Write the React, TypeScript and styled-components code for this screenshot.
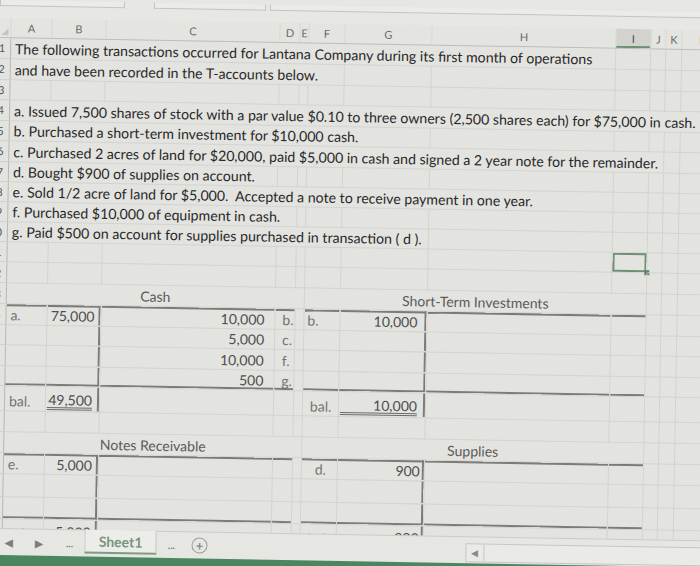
import React from "react";
import styled, { createGlobalStyle, css } from "styled-components";

const COLS = [12, 41, 54, 174, 20, 9, 36, 87, 184, 35, 15, 16, 40, 40];
const TEMPLATE = COLS.map((c) => `${c}px`).join(" ");
const LETTERS = ["", "A", "B", "C", "D", "E", "F", "G", "H", "I", "J", "K", "L", "M"];
const LINE = "#7b7b79";
const GRID = "#d3d3d0";
const SEL = "#6f8f73";
const FONT = `Lato, "Liberation Sans", Arial, sans-serif`;

const GlobalStyle = createGlobalStyle`
  html, body { margin: 0; padding: 0; background: #e6e6e3; overflow: hidden; }
  body { width: 700px; height: 566px; font-family: ${FONT}; }
`;

const Frame = styled.div`
  width: 720px;
  height: 600px;
  transform: rotate(1deg);
  transform-origin: 0 0;
  display: flex;
  flex-direction: column;
  background: #e3e3e0;
`;

const TopStrip = styled.div`
  height: 18px;
  flex-shrink: 0;
  display: flex;
  align-items: flex-start;
  background: #e7e7e4;
`;

const FieldBox = styled.div<{ $w: number; $ml: number }>`
  width: ${(p) => p.$w}px;
  margin-left: ${(p) => p.$ml}px;
  height: 6px;
  box-sizing: border-box;
  border: 1px solid #c3c3c0;
  border-top: none;
  background: #ebebe8;
`;

const HeaderRow = styled.div`
  display: grid;
  flex-shrink: 0;
  grid-template-columns: ${TEMPLATE};
  height: 20px;
  box-sizing: border-box;
  border-bottom: 1px solid #bdbdba;
  background: #e4e4e1;
`;

const HeaderCell = styled.div<{ $active?: boolean }>`
  display: flex;
  align-items: center;
  justify-content: center;
  font-size: 11px;
  color: #6b6b6b;
  border-right: 1px solid #d8d8d5;
  position: relative;
  ${(p) =>
    p.$active &&
    css`
      background: #d2d3cf;
      color: #4a4a4a;
      box-shadow: inset 0 -2px 0 ${SEL};
    `}
`;

const CornerMark = styled.span`
  position: absolute;
  right: 2px;
  bottom: 2px;
  width: 0;
  height: 0;
  border-left: 7px solid transparent;
  border-bottom: 7px solid #c4c4c1;
`;

const SheetBody = styled.div`
  height: 490px;
  flex-shrink: 0;
  overflow: hidden;
`;

const Row = styled.div<{ $h: number }>`
  display: grid;
  grid-template-columns: ${TEMPLATE};
  height: ${(p) => p.$h}px;
`;

const RowHead = styled.div`
  box-sizing: border-box;
  border-right: 1px solid #b8b8b5;
  border-bottom: 1px solid #d0d0cd;
  display: flex;
  align-items: center;
  justify-content: flex-end;
  padding-right: 5px;
  overflow: hidden;
  font-size: 11px;
  color: #555;
`;

type Tone = "main" | "num" | "label" | "title";
const TONES: Record<Tone, string> = {
  main: "#282828",
  num: "#4e4e4e",
  label: "#737373",
  title: "#5a5a5a",
};

type CellProps = {
  $span: number;
  $align: "left" | "right" | "center";
  $tone: Tone;
  $pl: number;
  $pr: number;
  $t?: boolean;
  $b?: boolean;
  $r?: boolean;
  $sel?: boolean;
  $size: number;
};

const shadow = (p: CellProps) => {
  const s: string[] = [];
  if (p.$t) s.push(`inset 0 2px 0 ${LINE}`);
  if (p.$b) s.push(`inset 0 -2px 0 ${LINE}`);
  if (p.$r) s.push(`inset -2px 0 0 ${LINE}`);
  if (p.$sel) s.push(`inset 0 0 0 2px ${SEL}`);
  return s.length ? s.join(", ") : "none";
};

const Cell = styled.div<CellProps>`
  grid-column: span ${(p) => p.$span};
  box-sizing: border-box;
  border-right: 1px solid ${GRID};
  border-bottom: 1px solid ${GRID};
  display: flex;
  align-items: flex-end;
  justify-content: ${(p) =>
    p.$align === "right" ? "flex-end" : p.$align === "center" ? "center" : "flex-start"};
  padding: 0 ${(p) => p.$pr}px 1px ${(p) => p.$pl}px;
  white-space: pre;
  font-size: ${(p) => p.$size}px;
  line-height: 16px;
  color: ${(p) => TONES[p.$tone]};
  box-shadow: ${(p) => shadow(p)};
  position: relative;
  ${(p) =>
    p.$sel &&
    css`
      &::after {
        content: "";
        position: absolute;
        right: -3px;
        bottom: -3px;
        width: 5px;
        height: 5px;
        background: #5f8064;
      }
    `}
`;

const Underlined = styled.span`
  display: block;
  width: 100%;
  text-align: right;
  line-height: 15px;
  border-bottom: 3px double #6a6a6a;
`;

const TabBar = styled.div`
  height: 27px;
  flex-shrink: 0;
  box-sizing: border-box;
  display: flex;
  align-items: stretch;
  background: #e6e6e3;
  border-top: 1px solid #cbcbc8;
  padding-left: 12px;
`;

const NavItem = styled.div<{ $w: number; $ml: number }>`
  width: ${(p) => p.$w}px;
  margin-left: ${(p) => p.$ml}px;
  display: flex;
  align-items: center;
  justify-content: center;
  color: #7c7c7c;
  font-size: 10px;
  font-weight: 700;
`;

const SheetTab = styled.div`
  width: 72px;
  margin-left: 8px;
  height: 24px;
  box-sizing: border-box;
  display: flex;
  align-items: center;
  justify-content: center;
  background: #ecece9;
  border-left: 1px solid #cbcbc8;
  border-right: 1px solid #c4c4c1;
  border-bottom: 2px solid #7e9c82;
  color: #77967b;
  font-weight: 700;
  font-size: 14px;
  margin-top: -1px;
`;

const AddButton = styled.div`
  width: 16px;
  height: 16px;
  margin-left: 13px;
  align-self: center;
  box-sizing: border-box;
  border: 1.5px solid #9a9a9a;
  border-radius: 50%;
  display: flex;
  align-items: center;
  justify-content: center;
  color: #8a8a8a;
  font-size: 13px;
  font-weight: 700;
  line-height: 1;
`;

const ScrollBar = styled.div`
  margin-left: auto;
  width: 245px;
  height: 19px;
  margin-top: 6px;
  box-sizing: border-box;
  border: 1px solid #c6c6c3;
  background: #eaeae8;
  display: flex;
`;

const ScrollBtn = styled.div`
  width: 18px;
  box-sizing: border-box;
  border-right: 1px solid #c6c6c3;
  display: flex;
  align-items: center;
  justify-content: center;
  color: #8a8a8a;
  font-size: 9px;
`;

const StatusBar = styled.div`
  height: 45px;
  flex-shrink: 0;
  background: #4a8660;
`;

type Spec = {
  c: number;
  span?: number;
  text?: string;
  align?: "left" | "right" | "center";
  tone?: Tone;
  pl?: number;
  pr?: number;
  t?: boolean;
  b?: boolean;
  r?: boolean;
  u?: boolean;
  sel?: boolean;
};

type RowSpec = { h: number; cells: Spec[] };

const tTop = (s: Spec[]) => s.map((x) => ({ ...x, t: true }));

const ROWS: RowSpec[] = [
  { h: 20.5, cells: [{ c: 1, span: 8, tone: "main", text: "The following transactions occurred for Lantana Company during its first month of operations" }] },
  { h: 21, cells: [{ c: 1, span: 6, tone: "main", text: "and have been recorded in the T-accounts below." }] },
  { h: 20.5, cells: [] },
  { h: 20.5, cells: [{ c: 1, span: 12, tone: "main", text: "a. Issued 7,500 shares of stock with a par value $0.10 to three owners (2,500 shares each) for $75,000 in cash." }] },
  { h: 20, cells: [{ c: 1, span: 7, tone: "main", text: "b. Purchased a short-term investment for $10,000 cash." }] },
  { h: 21, cells: [{ c: 1, span: 10, tone: "main", text: "c. Purchased 2 acres of land for $20,000, paid $5,000 in cash and signed a 2 year note for the remainder." }] },
  { h: 20, cells: [{ c: 1, span: 3, tone: "main", text: "d. Bought $900 of supplies on account." }] },
  { h: 20, cells: [{ c: 1, span: 8, tone: "main", text: "e. Sold 1/2 acre of land for $5,000.  Accepted a note to receive payment in one year." }] },
  { h: 20, cells: [{ c: 1, span: 4, tone: "main", text: "f. Purchased $10,000 of equipment in cash." }] },
  { h: 20, cells: [{ c: 1, span: 7, tone: "main", text: "g. Paid $500 on account for supplies purchased in transaction ( d )." }] },
  { h: 20.5, cells: [{ c: 9, sel: true }] },
  { h: 21, cells: [] },
  {
    h: 21,
    cells: [
      { c: 1, span: 5, text: "Cash", align: "center", tone: "title" },
      { c: 6, span: 4, text: "Short-Term Investments", align: "center", tone: "title" },
    ],
  },
  {
    h: 20.5,
    cells: tTop([
      { c: 1, text: "a.", tone: "label" },
      { c: 2, text: "75,000", align: "right", pr: 6, r: true },
      { c: 3, text: "10,000", align: "right", pr: 10 },
      { c: 4, text: "b.", tone: "label", pl: 7 },
      { c: 6, text: "b.", tone: "label", pl: 3 },
      { c: 7, text: "10,000", align: "right", pr: 9, r: true },
      { c: 8 },
      { c: 9 },
    ]),
  },
  {
    h: 20.5,
    cells: [
      { c: 2, r: true },
      { c: 3, text: "5,000", align: "right", pr: 10 },
      { c: 4, text: "c.", tone: "label", pl: 7 },
      { c: 7, r: true },
    ],
  },
  {
    h: 20.5,
    cells: [
      { c: 2, r: true },
      { c: 3, text: "10,000", align: "right", pr: 10 },
      { c: 4, text: "f.", tone: "label", pl: 7 },
      { c: 7, r: true },
    ],
  },
  {
    h: 20.5,
    cells: [
      { c: 1, b: true },
      { c: 2, r: true, b: true },
      { c: 3, text: "500", align: "right", pr: 10, b: true },
      { c: 4, text: "g.", tone: "label", pl: 7, b: true },
      { c: 6, b: true },
      { c: 7, r: true, b: true },
      { c: 8, b: true },
      { c: 9, b: true },
    ],
  },
  {
    h: 24.5,
    cells: [
      { c: 1, text: "bal.", tone: "label" },
      { c: 2, text: "49,500", u: true, pr: 7, pl: 1, r: true },
      { c: 6, text: "bal.", tone: "label", pl: 7 },
      { c: 7, text: "10,000", u: true, pr: 8, pl: 1, r: true },
    ],
  },
  { h: 21, cells: [] },
  {
    h: 21,
    cells: [
      { c: 1, span: 5, text: "Notes Receivable", align: "center", tone: "title" },
      { c: 6, span: 4, text: "Supplies", align: "center", tone: "title" },
    ],
  },
  {
    h: 21.5,
    cells: tTop([
      { c: 1, text: "e.", tone: "label" },
      { c: 2, text: "5,000", align: "right", pr: 6, r: true },
      { c: 3 },
      { c: 4 },
      { c: 6, text: "d.", tone: "label", pl: 13 },
      { c: 7, text: "900", align: "right", pr: 4, r: true },
      { c: 8 },
      { c: 9 },
    ]),
  },
  { h: 22.5, cells: [{ c: 2, r: true }, { c: 7, r: true }] },
  {
    h: 22.5,
    cells: [
      { c: 1, b: true },
      { c: 2, r: true, b: true },
      { c: 3, b: true },
      { c: 4, b: true },
      { c: 6, b: true },
      { c: 7, r: true, b: true },
      { c: 8, b: true },
      { c: 9, b: true },
    ],
  },
  {
    h: 24,
    cells: [
      { c: 1, text: "bal.", tone: "label" },
      { c: 2, text: "5,000", u: true, pr: 6, pl: 1, r: true },
      { c: 6, text: "bal.", tone: "label", pl: 7 },
      { c: 7, text: "900", u: true, pr: 4, pl: 1, r: true },
    ],
  },
];

function SheetRow({ row, index }: { row: RowSpec; index: number }) {
  const out: React.ReactNode[] = [<RowHead key="h">{index + 1}</RowHead>];
  let col = 1;
  while (col < COLS.length) {
    const spec = row.cells.find((s) => s.c === col);
    const span = spec?.span ?? 1;
    const tone: Tone = spec?.tone ?? "num";
    const centered = spec?.align === "right" || spec?.align === "center";
    out.push(
      <Cell
        key={col}
        $span={span}
        $align={spec?.align ?? "left"}
        $tone={tone}
        $pl={spec?.pl ?? (centered ? 2 : 4)}
        $pr={spec?.pr ?? 2}
        $t={spec?.t}
        $b={spec?.b}
        $r={spec?.r}
        $sel={spec?.sel}
        $size={tone === "main" ? 14.15 : 14}
      >
        {spec?.text ? spec.u ? <Underlined>{spec.text}</Underlined> : spec.text : null}
      </Cell>
    );
    col += span;
  }
  return <Row $h={row.h}>{out}</Row>;
}

export default function App() {
  return (
    <>
      <GlobalStyle />
      <Frame>
        <TopStrip>
          <FieldBox $w={125} $ml={0} />
          <FieldBox $w={112} $ml={29} />
          <FieldBox $w={450} $ml={4} />
        </TopStrip>
        <HeaderRow>
          {LETTERS.map((l, i) => (
            <HeaderCell key={i} $active={l === "I"}>
              {i === 0 ? <CornerMark /> : l}
            </HeaderCell>
          ))}
        </HeaderRow>
        <SheetBody>
          {ROWS.map((r, i) => (
            <SheetRow key={i} row={r} index={i} />
          ))}
        </SheetBody>
        <TabBar>
          <NavItem $w={14} $ml={0}>◀</NavItem>
          <NavItem $w={14} $ml={16}>▶</NavItem>
          <NavItem $w={14} $ml={16}>...</NavItem>
          <SheetTab>Sheet1</SheetTab>
          <NavItem $w={14} $ml={8}>...</NavItem>
          <AddButton>+</AddButton>
          <ScrollBar>
            <ScrollBtn>◀</ScrollBtn>
          </ScrollBar>
        </TabBar>
        <StatusBar />
      </Frame>
    </>
  );
}
